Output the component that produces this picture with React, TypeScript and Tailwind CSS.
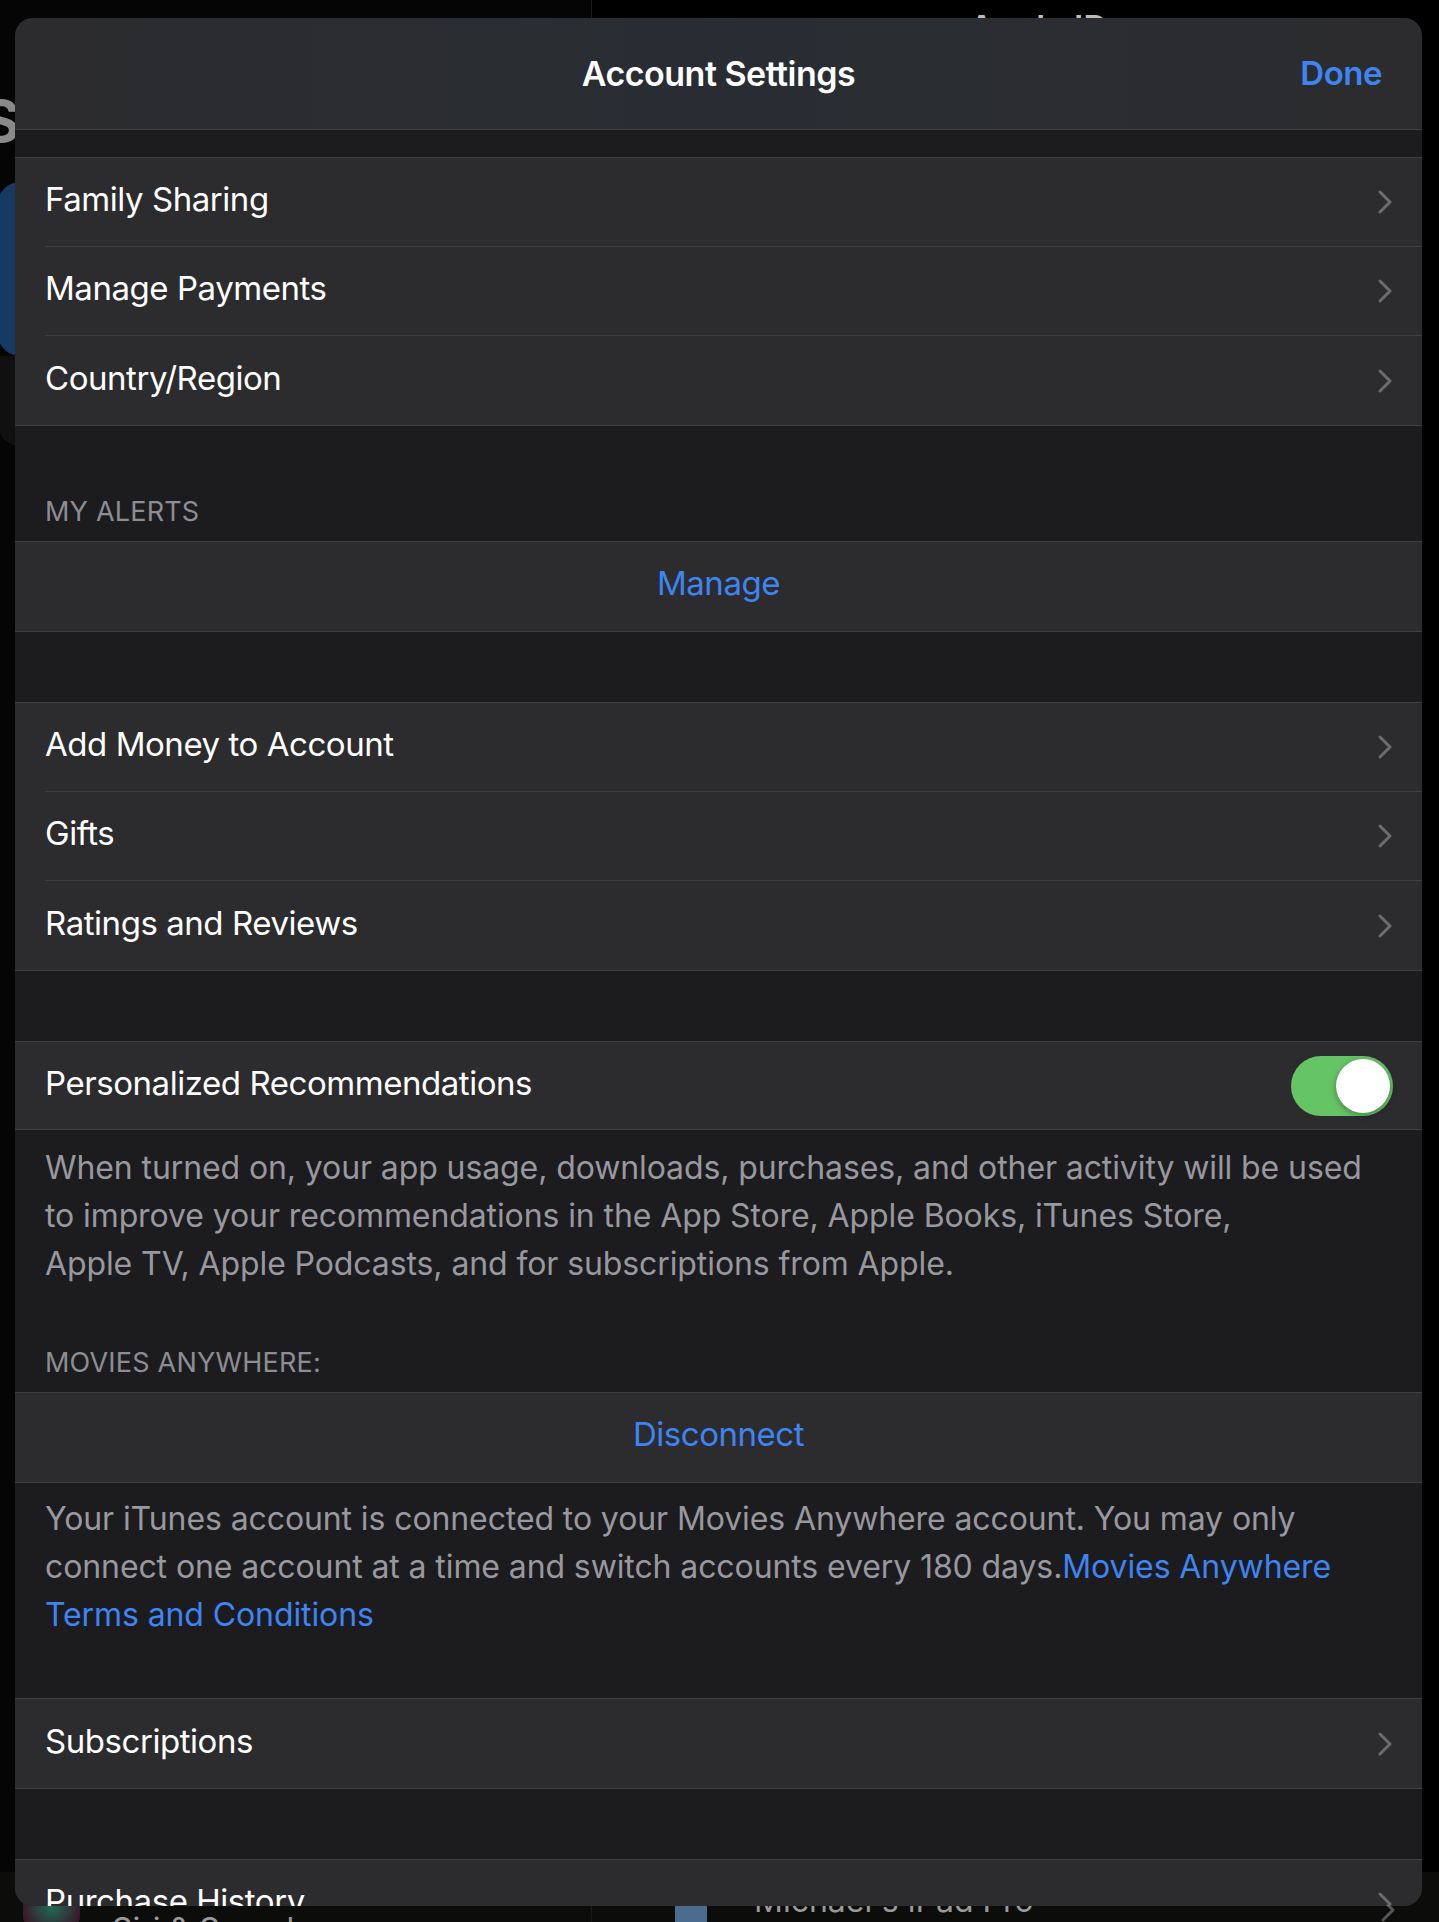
import React from "react";

function Chevron({ color = "#6c6c70" }: { color?: string }) {
  return (
    <svg width="14" height="24" viewBox="0 0 14 24" fill="none" className="shrink-0">
      <path d="M2 2 L12 12 L2 22" stroke={color} strokeWidth="3" strokeLinecap="round" strokeLinejoin="round" />
    </svg>
  );
}

function Row({ label, last }: { label: string; last?: boolean }) {
  return (
    <div className="pl-[30px]">
      <div className={`flex h-[89px] items-center justify-between pr-[30px] ${last ? "" : "border-b border-[#3f3f43]"}`}>
        <span className="mb-[4px] text-[33px] tracking-[-0.45px] text-white">{label}</span>
        <Chevron />
      </div>
    </div>
  );
}

function Group({ children }: { children: React.ReactNode }) {
  return <div className="shrink-0 border-y border-[#3f3f43] bg-[#2c2c2e]">{children}</div>;
}

function ActionRow({ label }: { label: string }) {
  return (
    <Group>
      <div className="flex h-[89px] items-center justify-center">
        <span className="mb-[5px] text-[33px] tracking-[-0.45px] text-[#3e84f2]">{label}</span>
      </div>
    </Group>
  );
}

function Toggle() {
  return (
    <div className="flex h-[60px] w-[102px] items-center justify-end rounded-full bg-[#65c466] p-[3px]">
      <div className="h-[54px] w-[54px] rounded-full bg-white shadow-[0_2px_6px_rgba(0,0,0,0.35)]" />
    </div>
  );
}

export default function App() {
  return (
    <div className="relative h-[1922px] w-[1439px] overflow-hidden bg-black font-['Inter',sans-serif]">
      {/* settings split view behind the sheet */}
      <div className="flex h-full">
        <div className="flex w-[592px] flex-col border-r border-[#1a1a1a] bg-[#050505]">
          <div className="-ml-[18px] mt-[86px] text-[58px] font-bold leading-[70px] text-[#8a8a8a]">Settings</div>
          <div className="-ml-[2px] mt-[26px] h-[174px] w-[560px] rounded-[22px] bg-[#173a63]" />
          <div className="-ml-[2px] h-[90px] w-[560px] rounded-b-[22px] bg-[#101010]" />
          <div className="flex-1" />
          <div className="flex h-[50px] shrink-0 items-start gap-[32px] bg-[#0c0d0a] pl-[23px]">
            <div className="h-[58px] w-[57px] rounded-[14px] bg-[radial-gradient(circle_at_50%_60%,#1f6b55,#3a1424_70%,#1b1b1b)]" />
            <span className="mt-[38px] text-[32px] leading-[40px] text-[#9a9a9a]">Siri &amp; Search</span>
          </div>
        </div>
        <div className="flex flex-1 flex-col bg-[#000]">
          <div className="text-center">
            <span className="relative top-[2px] ml-[46px] text-[34px] font-semibold text-[#bdbdbd]">Apple ID</span>
          </div>
          <div className="flex-1" />
          <div className="flex h-[50px] shrink-0 items-start gap-[47px] bg-[#0c0d0a] pl-[83px] pr-[44px]">
            <div className="mt-[31px] h-[19px] w-[32px] rounded-t-[3px] bg-[#4b6c8c]" />
            <span className="mt-[9px] text-[32px] leading-[40px] text-[#9a9a9a]">Michael's iPad Pro</span>
            <div className="ml-auto mt-[26px]">
              <Chevron color="#555558" />
            </div>
          </div>
        </div>
      </div>

      {/* account settings sheet */}
      <div className="absolute left-[15px] top-[18px] flex h-[1888px] w-[1407px] flex-col overflow-hidden rounded-[18px] bg-[#1c1c1e]">
        <div className="relative flex h-[112px] shrink-0 items-center justify-center border-b border-[#3f3f43] bg-gradient-to-r from-[#2c2c2e] via-[#292d33] to-[#2c2c2e]">
          <span className="text-[34px] font-semibold tracking-[-0.5px] text-white">Account Settings</span>
          <span className="absolute right-[40px] text-[33px] font-semibold tracking-[-0.5px] text-[#3e84f2]">Done</span>
        </div>

        <div className="h-[27px] shrink-0" />
        <Group>
          <Row label="Family Sharing" />
          <Row label="Manage Payments" />
          <Row label="Country/Region" last />
        </Group>

        <div className="flex h-[115px] shrink-0 items-end px-[30px] pb-[12px]">
          <span className="text-[27px] leading-[34px] tracking-[0.2px] text-[#8d8d93]">MY ALERTS</span>
        </div>
        <ActionRow label="Manage" />

        <div className="h-[70px] shrink-0" />
        <Group>
          <Row label="Add Money to Account" />
          <Row label="Gifts" />
          <Row label="Ratings and Reviews" last />
        </Group>

        <div className="h-[70px] shrink-0" />
        <Group>
          <div className="flex h-[87px] items-center justify-between pl-[30px] pr-[29px]">
            <span className="mb-[3px] text-[33px] tracking-[-0.45px] text-white">Personalized Recommendations</span>
            <Toggle />
          </div>
        </Group>
        <p className="shrink-0 px-[30px] pt-[14px] text-[32px] leading-[48px] tracking-[-0.1px] text-[#98989e]">
          When turned on, your app usage, downloads, purchases, and other activity will be used to improve your recommendations in the App Store, Apple Books, iTunes Store,
          <br />
          Apple TV, Apple Podcasts, and for subscriptions from Apple.
        </p>

        <div className="flex h-[104px] shrink-0 items-end px-[30px] pb-[12px]">
          <span className="text-[27px] leading-[34px] tracking-[0.2px] text-[#8d8d93]">MOVIES ANYWHERE:</span>
        </div>
        <ActionRow label="Disconnect" />
        <p className="shrink-0 px-[30px] pt-[12px] text-[32px] leading-[48px] tracking-[-0.1px] text-[#98989e]">
          Your iTunes account is connected to your Movies Anywhere account. You may only connect one account at a time and switch accounts every 180 days.
          <span className="text-[#3e84f2]">Movies Anywhere Terms and Conditions</span>
        </p>

        <div className="h-[59px] shrink-0" />
        <Group>
          <Row label="Subscriptions" last />
        </Group>

        <div className="h-[70px] shrink-0" />
        <Group>
          <Row label="Purchase History" />
        </Group>
      </div>
    </div>
  );
}
